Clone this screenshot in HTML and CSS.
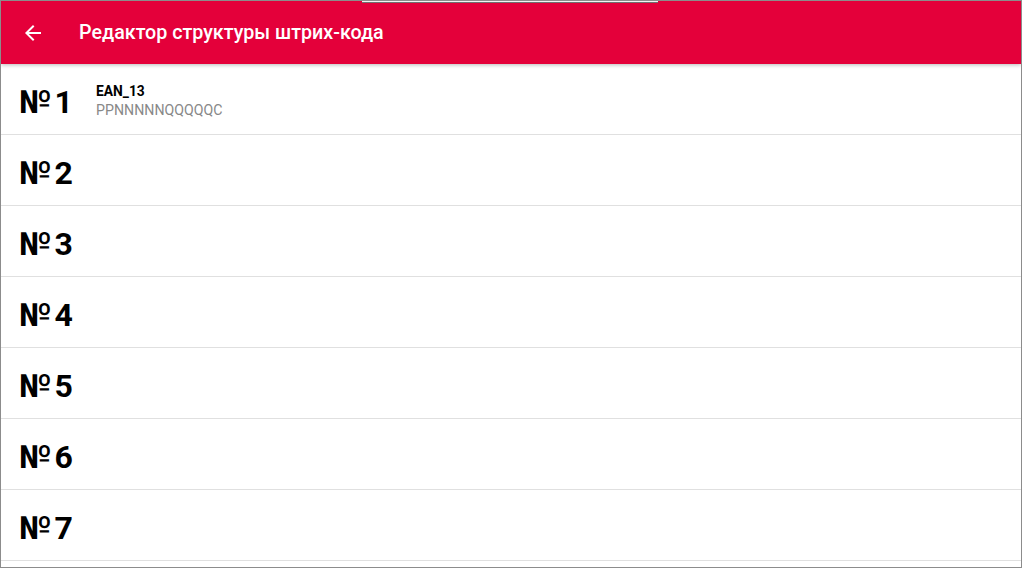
FILE: index.html
```html
<!DOCTYPE html>
<html lang="ru">
<head>
<meta charset="utf-8">
<title>Редактор структуры штрих-кода</title>
<link rel="stylesheet" href="styles.css">
</head>
<body>
<div class="screen">
  <div class="notch"></div>
  <header class="appbar">
    <svg class="back" viewBox="0 0 24 24" width="24" height="24"><path d="M20 11H7.83l5.59-5.59L12 4l-8 8 8 8 1.41-1.41L7.83 13H20v-2z" fill="#fff"/></svg>
    <h1 class="title">Редактор структуры штрих-кода</h1>
  </header>
  <ul class="list">
    <li class="row"><span class="num"><span class="sign">№</span>1</span><div class="info"><div class="name">EAN_13</div><div class="mask">PPNNNNNQQQQQC</div></div></li>
    <li class="row"><span class="num"><span class="sign">№</span>2</span></li>
    <li class="row"><span class="num"><span class="sign">№</span>3</span></li>
    <li class="row"><span class="num"><span class="sign">№</span>4</span></li>
    <li class="row"><span class="num"><span class="sign">№</span>5</span></li>
    <li class="row"><span class="num"><span class="sign">№</span>6</span></li>
    <li class="row"><span class="num"><span class="sign">№</span>7</span></li>
  </ul>
</div>
</body>
</html>
```
FILE: styles.css
```css
* { box-sizing: border-box; }
html, body { margin: 0; padding: 0; }
body {
  width: 1022px;
  height: 568px;
  overflow: hidden;
  font-family: Roboto, "Noto Sans", "Liberation Sans", sans-serif;
  background: #fff;
}
.screen {
  position: relative;
  width: 1022px;
  height: 568px;
  border: 1px solid #8c8c8c;
  overflow: hidden;
  background: #fff;
  display: flex;
  flex-direction: column;
}
.notch {
  position: absolute;
  left: 361px;
  top: -1px;
  width: 296px;
  height: 3px;
  background: #f2f2f2;
  border-bottom: 1px solid #707070;
  z-index: 3;
}
.appbar {
  position: relative;
  z-index: 2;
  height: 63px;
  flex: none;
  background: #e4003a;
  display: flex;
  align-items: center;
  padding-left: 20px;
  box-shadow: 0 1px 4px rgba(0,0,0,0.28);
}
.back { display: block; flex: none; }
.title {
  margin: 0 0 0 34px;
  color: #fff;
  font-size: 19.7px;
  font-weight: 500;
}
.list {
  list-style: none;
  margin: 0;
  padding: 0;
}
.row {
  height: 71px;
  border-bottom: 1px solid #e0e0e0;
  display: flex;
  align-items: center;
  padding: 6px 0 0 18px;
}
.num {
  width: 77px;
  flex: none;
  font-size: 32px;
  font-weight: 700;
  color: #000;
}
.sign { margin-right: 3px; }
.info {
  margin-top: -4px;
}
.name {
  font-size: 13.8px;
  font-weight: 700;
  color: #000;
  line-height: 19px;
}
.mask {
  font-size: 14.2px;
  color: #888;
  line-height: 18px;
}
```
